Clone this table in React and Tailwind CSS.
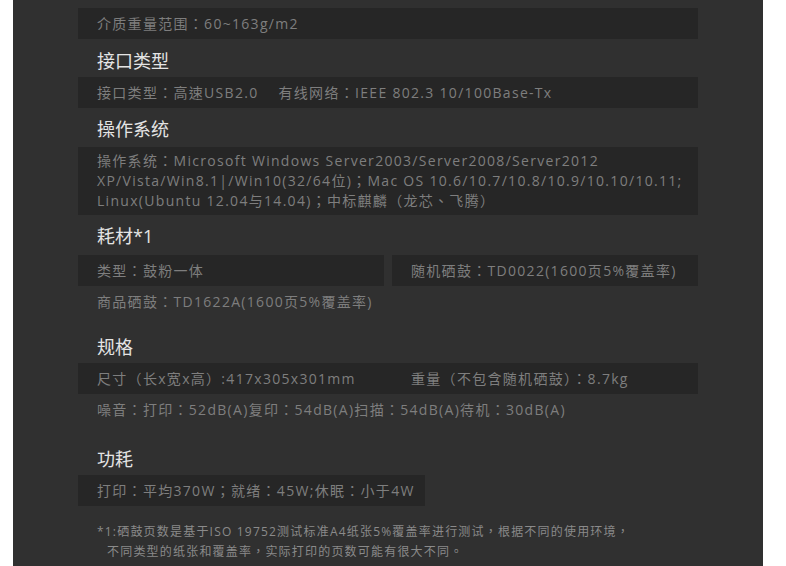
const font = { fontFamily: '"Open Sans", "Noto Sans CJK TC", sans-serif' };

function Heading({ children, className = "" }) {
  return (
    <h3 className={`mt-[7px] mb-[2px] px-[19px] text-[18px] leading-[28px] font-normal text-[#e4e4e4] ${className}`}>
      {children}
    </h3>
  );
}

function Row({ children, className = "" }) {
  return (
    <div className={`bg-[#262626] px-[19px] text-[14px] tracking-[1.3px] text-[#7e7e7e] leading-[31px] whitespace-nowrap ${className}`}>
      {children}
    </div>
  );
}

export default function App() {
  return (
    <div className="w-[786px] h-[566px] bg-white overflow-hidden" style={font}>
      <div className="ml-[13px] w-[750px] h-full bg-[#303030] pt-[8px] pl-[65px]">
        <div className="w-[620px]">
          <Row>介质重量范围：60~163g/m2</Row>

          <Heading className="mt-[8px] mb-0">接口类型</Heading>
          <Row className="flex gap-[20px]">
            <span>接口类型：高速USB2.0</span>
            <span>有线网络：IEEE 802.3 10/100Base-Tx</span>
          </Row>

          <Heading className="mt-[6px] mb-[4px]">操作系统</Heading>
          <div className="bg-[#262626] px-[19px] py-[4px] text-[14px] tracking-[1.3px] leading-[20px] text-[#7e7e7e] whitespace-nowrap">
            操作系统：Microsoft Windows Server2003/Server2008/Server2012
            <br />
            XP/Vista/Win8.1|/Win10(32/64位)；Mac OS 10.6/10.7/10.8/10.9/10.10/10.11;
            <br />
            Linux(Ubuntu 12.04与14.04)；中标麒麟（龙芯、飞腾）
          </div>

          <Heading className="mt-[6px] mb-[5px]">耗材*1</Heading>
          <div className="grid grid-cols-2 gap-[8px]">
            <Row>类型：鼓粉一体</Row>
            <Row>随机硒鼓：TD0022(1600页5%覆盖率)</Row>
          </div>
          <div className="px-[19px] text-[14px] tracking-[1.3px] leading-[31px] text-[#7e7e7e]">
            商品硒鼓：TD1622A(1600页5%覆盖率)
          </div>

          <Heading className="mt-[16px] mb-[2px]">规格</Heading>
          <div className="grid grid-cols-2 gap-[8px] bg-[#262626]">
            <Row>尺寸（长x宽x高）:417x305x301mm</Row>
            <Row>重量（不包含随机硒鼓）：8.7kg</Row>
          </div>
          <div className="px-[19px] text-[14px] tracking-[1.3px] leading-[31px] text-[#7e7e7e] whitespace-nowrap">
            噪音：打印：52dB(A)复印：54dB(A)扫描：54dB(A)待机：30dB(A)
          </div>

          <Heading className="mt-[20px] mb-[2px]">功耗</Heading>
          <div className="flex">
            <Row className="pr-[10px]">打印：平均370W；就绪：45W;休眠：小于4W</Row>
          </div>

          <div className="mt-[16px] px-[19px] text-[12px] tracking-[1.2px] leading-[20px] text-[#8a8a8a] whitespace-nowrap">
            <p>*1:硒鼓页数是基于ISO 19752测试标准A4纸张5%覆盖率进行测试，根据不同的使用环境，</p>
            <p className="pl-[10px]">不同类型的纸张和覆盖率，实际打印的页数可能有很大不同。</p>
          </div>
        </div>
      </div>
    </div>
  );
}
